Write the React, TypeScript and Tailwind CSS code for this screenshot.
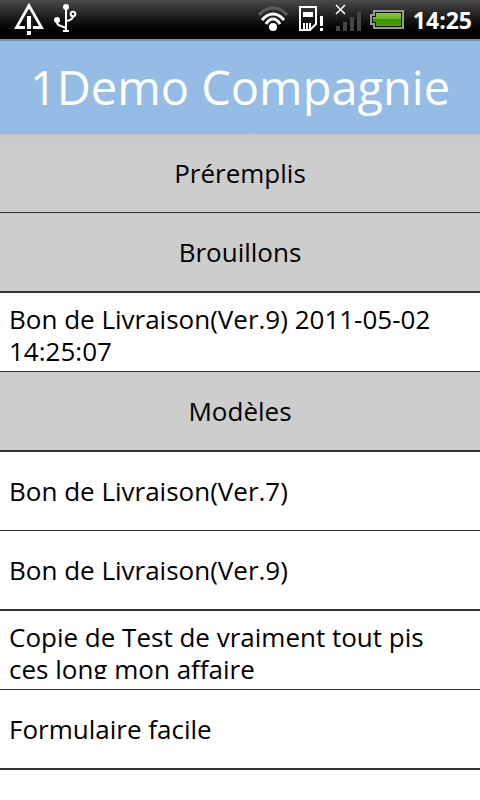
import { clsx } from "clsx";

interface ListEntry {
  label: string;
  section?: boolean;
}

const entries: ListEntry[] = [
  { label: "Préremplis", section: true },
  { label: "Brouillons", section: true },
  { label: "Bon de Livraison(Ver.9) 2011-05-02 14:25:07" },
  { label: "Modèles", section: true },
  { label: "Bon de Livraison(Ver.7)" },
  { label: "Bon de Livraison(Ver.9)" },
  { label: "Copie de Test de vraiment tout pis ces long mon affaire" },
  { label: "Formulaire facile" },
];

function WarningIcon() {
  return (
    <svg width="34" height="36" viewBox="0 0 34 36" aria-hidden="true">
      <path d="M17 5.5 4.5 27.5H29.5Z" fill="none" stroke="#fff" strokeWidth="2.8" />
      <path d="M13 15h8v14h-8z" fill="#1c1c1c" />
      <path d="M15 16h4v13h-4zM15 31h4v4h-4z" fill="#fff" />
    </svg>
  );
}

function UsbIcon() {
  return (
    <svg width="26" height="36" viewBox="0 0 26 36" fill="none" stroke="#fff" strokeWidth="2" aria-hidden="true">
      <path d="M14 6v25M5 20v2q0 3 4 4l5 2M21 16q0 4-7 5M11 31h6" />
      <circle cx="14" cy="7" r="3" fill="#fff" stroke="none" />
      <circle cx="5" cy="20" r="3" fill="#fff" stroke="none" />
      <circle cx="21" cy="14" r="2.3" />
    </svg>
  );
}

function WifiIcon() {
  return (
    <svg width="33" height="36" viewBox="0 0 33 36" fill="none" strokeWidth="3" aria-hidden="true">
      <path d="M2 15Q8 8 16 8T30 15" stroke="#5c5c5c" />
      <path d="M5 20Q10 14 16 14T27 20M9 24Q12 19 16 19T23 24" stroke="#fff" />
      <circle cx="16" cy="27" r="4" fill="#fff" />
    </svg>
  );
}

function SimCardIcon() {
  return (
    <svg width="28" height="36" viewBox="0 0 28 36" aria-hidden="true">
      <path d="M2 7h16v17l-6 6H2z" fill="none" stroke="#fff" strokeWidth="2" />
      <path d="M5 12h10v5H5zM5 23h2v6H5zM8 23h2v6H8zM11 23h2v6h-2zM22 16h3v10h-3zM22 28h3v3h-3z" fill="#fff" />
    </svg>
  );
}

function SignalIcon() {
  return (
    <svg width="27" height="36" viewBox="0 0 27 36" aria-hidden="true">
      <path d="M2 26h4v5H2zM9 22h4v9H9zM16 17h4v14h-4zM23 12h4v19h-4z" fill="#454545" />
      <path d="m2 5 9 9M11 5l-9 9" stroke="#fff" strokeWidth="1.5" />
    </svg>
  );
}

function BatteryIcon() {
  return (
    <svg width="36" height="36" viewBox="0 0 36 36" aria-hidden="true">
      <defs>
        <linearGradient id="charge" x1="0" y1="0" x2="0" y2="1">
          <stop offset="0" stopColor="#8ac63e" />
          <stop offset=".5" stopColor="#67b51d" />
          <stop offset=".5" stopColor="#3f9400" />
          <stop offset="1" stopColor="#4ba303" />
        </linearGradient>
      </defs>
      <path d="M5 11h29v17H5v-4H2v-9h3z" fill="#111" stroke="#999" strokeWidth="2" />
      <path d="M7 13h25v13H7v-4H4v-5h3z" fill="url(#charge)" />
    </svg>
  );
}

function StatusBar() {
  return (
    <div className="flex h-[39px] items-start justify-between bg-linear-to-b from-[#4a4a4a] to-black pr-2 pl-3">
      <div className="flex gap-[6px]">
        <WarningIcon />
        <UsbIcon />
      </div>
      <div className="flex items-start gap-2">
        <WifiIcon />
        <SimCardIcon />
        <SignalIcon />
        <BatteryIcon />
        <time className="text-[23px] leading-10 font-bold text-white">14:25</time>
      </div>
    </div>
  );
}

export default function App() {
  return (
    <div className="min-h-screen bg-white font-['Open_Sans',sans-serif] text-black">
      <StatusBar />
      <header className="border-t-2 border-[#7193b4] bg-[#94bce4] py-[14px] text-center">
        <h1 className="text-[47px] leading-[65px] text-white">1Demo Compagnie</h1>
      </header>
      <ul>
        {entries.map(({ label, section }) => (
          <li
            key={label}
            className={clsx(
              "border-b border-[#333] even:border-b-2",
              section && "bg-[#cdcdcd] first:bg-linear-to-b first:from-[#c8c8c8] first:to-[#cdcdcd] first:to-25%",
            )}
          >
            {section ? (
              <h2 className="flex h-[78px] items-center justify-center text-[26px] leading-8">{label}</h2>
            ) : (
              <button type="button" className="block w-full pt-[10px] pr-5 pb-[10px] pl-[9px] text-left">
                <span className="flex h-[58px] items-center-safe overflow-hidden text-[26px] leading-8">{label}</span>
              </button>
            )}
          </li>
        ))}
      </ul>
    </div>
  );
}
